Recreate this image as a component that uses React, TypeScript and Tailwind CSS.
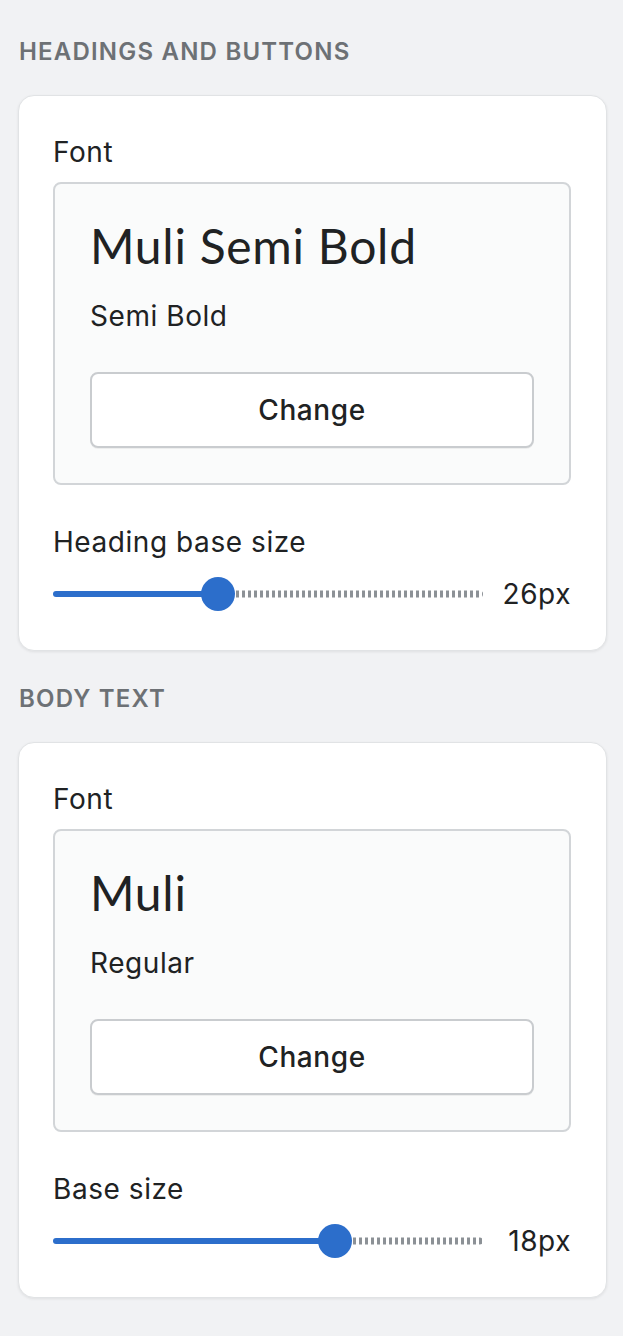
import { useState } from 'react'

type FontSection = {
  title: string
  family: string
  style: string
  sizeLabel: string
  value: number
  min: number
  max: number
}

const SECTIONS: FontSection[] = [
  { title: 'Headings and buttons', family: 'Muli Semi Bold', style: 'Semi Bold', sizeLabel: 'Heading base size', value: 26, min: 16, max: 42 },
  { title: 'Body text', family: 'Muli', style: 'Regular', sizeLabel: 'Base size', value: 18, min: 10, max: 22.2 },
]

function SizeSlider({ value, min, max }: { value: number; min: number; max: number }) {
  const pct = ((value - min) / (max - min)) * 100
  return (
    <div className="flex items-center gap-[18px]">
      <div className="relative h-[34px] flex-1">
        {/* remaining track, dotted */}
        <div
          className="absolute right-0 top-1/2 h-[7px] -translate-y-1/2 rounded-r-full bg-[repeating-linear-gradient(90deg,#8c9196_0_3px,transparent_3px_6px)]"
          style={{ left: `${pct}%` }}
        />
        {/* filled track */}
        <div
          className="absolute left-0 top-1/2 h-[6px] -translate-y-1/2 rounded-full bg-[#2c6ecb]"
          style={{ width: `${pct}%` }}
        />
        <div
          className="absolute top-1/2 h-[34px] w-[34px] -translate-x-1/2 -translate-y-1/2 rounded-full bg-[#2c6ecb]"
          style={{ left: `${pct}%` }}
        />
      </div>
      <span className="w-[70px] text-right text-[28px] leading-[40px] tracking-[0.02em] text-[#202223]">{value}px</span>
    </div>
  )
}

function FontCard({ s }: { s: FontSection }) {
  const [v] = useState(s.value)
  return (
    <div className="rounded-[16px] border border-[#e1e3e5] bg-white pl-[34px] pr-[35px] pt-[36px] pb-[36px] shadow-[0_1px_3px_rgba(0,0,0,0.08)]">
      <div className="text-[28px] leading-[40px] tracking-[0.02em] text-[#202223]">Font</div>

      <div className="mt-[10px] rounded-[8px] border-2 border-[#d2d5d8] bg-[#fafbfb] px-[35px] pt-[34px] pb-[35px]">
        <div className="font-['Lato',sans-serif] text-[48px] leading-[56px] tracking-[0.015em] text-[#202223]">
          {s.family}
        </div>
        <div className="mt-[22px] text-[28px] leading-[40px] tracking-[0.02em] text-[#202223]">{s.style}</div>
        <button className="mt-[36px] flex h-[76px] w-full items-center justify-center rounded-[8px] border-2 border-[#c9cccf] bg-white text-[28px] font-medium tracking-[0.02em] text-[#202223] shadow-[0_1px_0_rgba(0,0,0,0.05)]">
          Change
        </button>
      </div>

      <div className="mt-[37px] text-[28px] leading-[40px] tracking-[0.02em] text-[#202223]">{s.sizeLabel}</div>
      <div className="mt-[12px]">
        <SizeSlider value={v} min={s.min} max={s.max} />
      </div>
    </div>
  )
}

export default function App() {
  return (
    <div className="min-h-[1336px] bg-[#f1f2f4] pl-[18px] pr-[16px] pt-[36px] font-['Inter',sans-serif] antialiased">
      {SECTIONS.map((s, i) => (
        <section key={s.title} className={i > 0 ? 'mt-[32px]' : ''}>
          <h2 className="pl-px text-[24px] font-semibold uppercase leading-[32px] tracking-[0.05em] text-[#6d7175]">{s.title}</h2>
          <div className="mt-[27px]">
            <FontCard s={s} />
          </div>
        </section>
      ))}
    </div>
  )
}
